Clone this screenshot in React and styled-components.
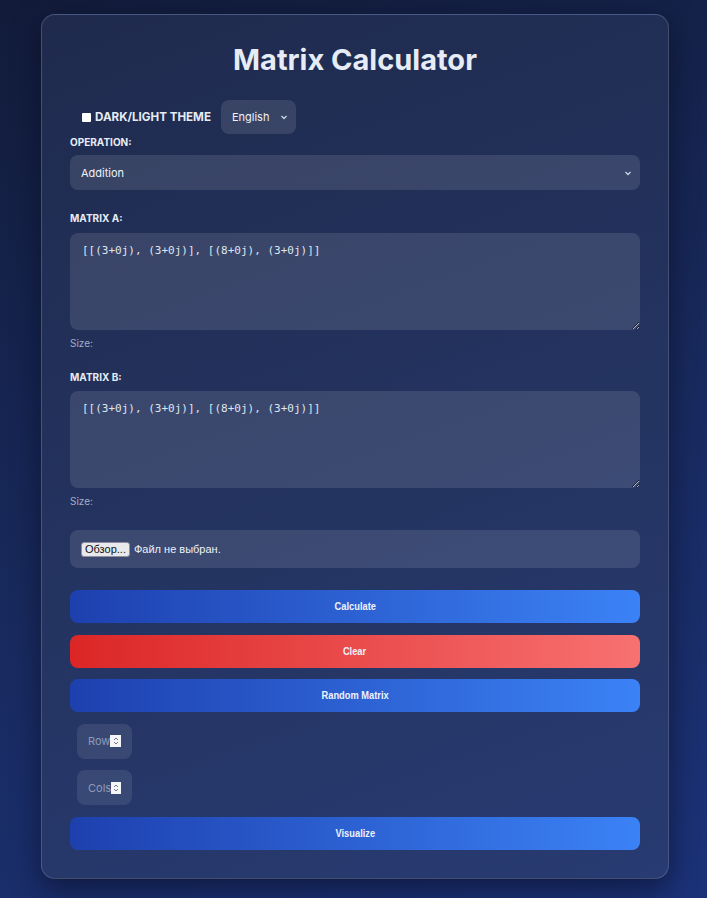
import React from "react";
import styled, { createGlobalStyle } from "styled-components";

const GlobalStyle = createGlobalStyle`
  html, body {
    margin: 0;
    padding: 0;
  }
  body {
    min-height: 898px;
    background: linear-gradient(160deg, #121b39 0%, #182a5e 55%, #1c3278 100%);
    font-family: Inter, "Noto Sans", sans-serif;
    color: #e2e8f0;
  }
`;

const Page = styled.div`
  padding: 14px 0 20px 3px;
`;

const Card = styled.div`
  width: 628px;
  box-sizing: border-box;
  margin: 0 auto;
  padding: 28px 28px 28px;
  border: 1px solid rgba(255, 255, 255, 0.16);
  border-radius: 14px;
  background: linear-gradient(160deg, #1f2a4d 0%, #243461 55%, #283b72 100%);
  box-shadow: 0 10px 28px rgba(5, 10, 30, 0.55);
`;

const Title = styled.h1`
  margin: 0;
  font-size: 29px;
  line-height: 34px;
  font-weight: 700;
  text-align: center;
  color: #e6ecf5;
`;

const ThemeRow = styled.div`
  display: flex;
  align-items: center;
  gap: 10px;
  margin-top: 23px;
  padding-left: 12px;
`;

const ThemeLabel = styled.label`
  display: flex;
  align-items: center;
  gap: 4px;
  font-size: 11.6px;
  font-weight: 700;
  color: #e6ecf5;
`;

const Check = styled.input`
  appearance: none;
  width: 9px;
  height: 9px;
  margin: 0;
  background: #ffffff;
  border-radius: 1px;
`;

const SelectWrap = styled.div`
  position: relative;
  width: ${(p) => p.$width || "100%"};
`;

const Select = styled.select`
  appearance: none;
  width: 100%;
  height: ${(p) => p.$h || 35}px;
  box-sizing: border-box;
  padding: 0 11px;
  border: none;
  border-radius: 8px;
  background: rgba(255, 255, 255, 0.11);
  color: #eef2f8;
  font-family: Inter, "Noto Sans", sans-serif;
  font-size: 11px;
  outline: none;
`;

const Chevron = styled.svg`
  position: absolute;
  right: 8px;
  top: 50%;
  width: 8px;
  height: 8px;
  margin-top: -4px;
  pointer-events: none;
`;

const Label = styled.div`
  font-size: 10px;
  line-height: 14px;
  font-weight: 700;
  text-transform: uppercase;
  color: #e6ecf5;
  margin-top: ${(p) => p.$top || 0}px;
  margin-bottom: ${(p) => p.$bottom || 6}px;
`;

const Area = styled.textarea`
  display: block;
  width: 100%;
  height: 97px;
  box-sizing: border-box;
  padding: 10px 12px;
  border: none;
  border-radius: 8px;
  background: rgba(255, 255, 255, 0.11);
  color: #dfe5ef;
  font-family: "DejaVu Sans Mono", "Liberation Mono", monospace;
  font-size: 11px;
  line-height: 15px;
  outline: none;
`;

const SizeText = styled.div`
  margin-top: 6px;
  font-size: 10px;
  line-height: 14px;
  color: #a3adc4;
`;

const FileBox = styled.div`
  display: flex;
  align-items: center;
  gap: 4px;
  height: 38px;
  box-sizing: border-box;
  margin-top: 22px;
  padding: 0 11px;
  border-radius: 8px;
  background: rgba(255, 255, 255, 0.11);
  font-family: "Liberation Sans", Arial, sans-serif;
  font-size: 11px;
  color: #eef2f8;
`;

const FileButton = styled.button`
  height: 15px;
  padding: 0 3px;
  border: 1px solid #8f8f9d;
  border-radius: 3px;
  background: #e9e9ed;
  color: #111;
  font-family: "Liberation Sans", Arial, sans-serif;
  font-size: 11px;
  line-height: 13px;
`;

const Actions = styled.div`
  display: flex;
  flex-direction: column;
  gap: 11.5px;
  margin-top: 22px;
`;

const Button = styled.button`
  height: 33px;
  border: none;
  border-radius: 8px;
  color: #eef2fb;
  font-family: "Liberation Sans", Arial, sans-serif;
  font-size: 10px;
  font-weight: 700;
  background: ${(p) =>
    p.$danger
      ? "linear-gradient(90deg, #dc2626 0%, #f87171 100%)"
      : "linear-gradient(90deg, #1e40af 0%, #3b82f6 100%)"};
`;

const ButtonText = styled.span`
  display: inline-block;
  transform: scaleX(0.93);
`;

const NumBox = styled.div`
  display: flex;
  align-items: center;
  width: 55px;
  height: 35px;
  box-sizing: border-box;
  margin-left: 7px;
  padding: 0 11px;
  border-radius: 8px;
  background: rgba(255, 255, 255, 0.09);
  font-size: 11px;
  color: #8f9ab8;
`;

const Spinner = styled.span`
  display: inline-flex;
  align-items: center;
  justify-content: center;
  width: 12px;
  height: 12px;
  background: #f4f5f8;
`;

const Chev = ({ color = "#cbd5e1" }) => (
  <Chevron viewBox="0 0 8 8">
    <path d="M1.5 3 L4 5.5 L6.5 3" fill="none" stroke={color} strokeWidth="1.3" />
  </Chevron>
);

const NumberField = ({ placeholder }) => (
  <NumBox>
    <span>{placeholder}</span>
    <Spinner>
      <svg width="8" height="10" viewBox="0 0 8 10">
        <path d="M2 4 L4 2 L6 4 M2 6 L4 8 L6 6" fill="none" stroke="#777" strokeWidth="1" />
      </svg>
    </Spinner>
  </NumBox>
);

const ActionButton = ({ children, danger }) => (
  <Button $danger={danger}>
    <ButtonText>{children}</ButtonText>
  </Button>
);

const sample = "[[(3+0j), (3+0j)], [(8+0j), (3+0j)]]";

const App = () => {
  return (
    <>
      <GlobalStyle />
      <Page>
        <Card>
          <Title>Matrix Calculator</Title>
          <ThemeRow>
            <ThemeLabel>
              <Check type="checkbox" />
              DARK/LIGHT THEME
            </ThemeLabel>
            <SelectWrap $width="75px">
              <Select $h={34} defaultValue="en">
                <option value="en">English</option>
              </Select>
              <Chev />
            </SelectWrap>
          </ThemeRow>

          <Label $top={1}>Operation:</Label>
          <SelectWrap>
            <Select defaultValue="add">
              <option value="add">Addition</option>
            </Select>
            <Chev />
          </SelectWrap>

          <Label $top={21} $bottom={8}>Matrix A:</Label>
          <Area defaultValue={sample} />
          <SizeText>Size:</SizeText>

          <Label $top={20} $bottom={7}>Matrix B:</Label>
          <Area defaultValue={sample} />
          <SizeText>Size:</SizeText>

          <FileBox>
            <FileButton>Обзор...</FileButton>
            <span>Файл не выбран.</span>
          </FileBox>

          <Actions>
            <ActionButton>Calculate</ActionButton>
            <ActionButton danger>Clear</ActionButton>
            <ActionButton>Random Matrix</ActionButton>
            <NumberField placeholder="Row" />
            <NumberField placeholder="Cols" />
            <ActionButton>Visualize</ActionButton>
          </Actions>
        </Card>
      </Page>
    </>
  );
};

export default App;
